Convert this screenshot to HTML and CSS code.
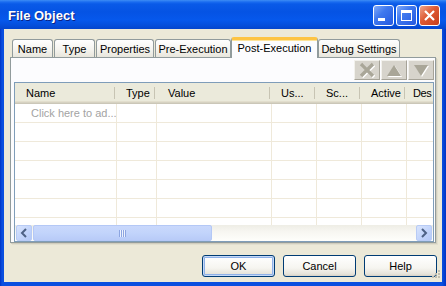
FILE: index.html
```html
<!DOCTYPE html>
<html lang="en">

<head>
    <meta charset="utf-8">
    <title>File Object</title>
    <link rel="stylesheet" href="styles.css">
</head>

<body>

    <div class="window">
        <div class="titlebar">
            <span class="title">File Object</span>
            <div class="caption-btns">
                <span class="cap">
                    <svg width="19" height="19" viewBox="0 0 19 19"><rect x="4" y="12" width="7" height="3" fill="#fff"/></svg>
                </span>
                <span class="cap">
                    <svg width="19" height="19" viewBox="0 0 19 19"><rect x="4.5" y="4.5" width="10" height="10" fill="none" stroke="#fff"/><rect x="4" y="4" width="11" height="3" fill="#fff"/></svg>
                </span>
                <span class="cap cap-close">
                    <svg width="19" height="19" viewBox="0 0 19 19"><path d="M5 5 L14 14 M14 5 L5 14" stroke="#fff" stroke-width="2.2"/></svg>
                </span>
            </div>
        </div>

        <div class="client">
            <div class="tabs">
                <div class="tab" style="width:41px">Name</div>
                <div class="tab" style="width:41px">Type</div>
                <div class="tab" style="width:58px">Properties</div>
                <div class="tab" style="width:76px">Pre-Execution</div>
                <div class="tab active" style="width:87px">Post-Execution</div>
                <div class="tab" style="width:82px">Debug Settings</div>
            </div>

            <div class="panel">
                <div class="toolbar">
                    <span class="tool">
                        <svg width="16" height="16" viewBox="0 0 16 16"><path d="M2 2 L14 14 M14 2 L2 14" stroke="#fff" stroke-width="3.4" transform="translate(1 1)"/><path d="M2 2 L14 14 M14 2 L2 14" stroke="#a9a698" stroke-width="3.4"/></svg>
                    </span>
                    <span class="tool">
                        <svg width="16" height="16" viewBox="0 0 16 16"><path d="M8 3 L15 14 L1 14 Z" fill="#fff" transform="translate(1 1)"/><path d="M8 3 L15 14 L1 14 Z" fill="#a9a698"/></svg>
                    </span>
                    <span class="tool">
                        <svg width="16" height="16" viewBox="0 0 16 16"><path d="M1 3 L15 3 L8 14 Z" fill="#fff" transform="translate(1 1)"/><path d="M1 3 L15 3 L8 14 Z" fill="#a9a698"/></svg>
                    </span>
                </div>

                <div class="grid">
                    <div class="grid-view">
                        <table>
                            <thead>
                                <tr>
                                    <th class="c-name">Name</th>
                                    <th class="c-type">Type</th>
                                    <th class="c-value">Value</th>
                                    <th class="c-small">Us...</th>
                                    <th class="c-small">Sc...</th>
                                    <th class="c-small">Active</th>
                                    <th class="c-desc">Des</th>
                                </tr>
                            </thead>
                            <tbody>
                                <tr><td class="hint">Click here to ad...</td><td></td><td></td><td></td><td></td><td></td><td></td></tr>
                                <tr><td></td><td></td><td></td><td></td><td></td><td></td><td></td></tr>
                                <tr><td></td><td></td><td></td><td></td><td></td><td></td><td></td></tr>
                                <tr><td></td><td></td><td></td><td></td><td></td><td></td><td></td></tr>
                                <tr><td></td><td></td><td></td><td></td><td></td><td></td><td></td></tr>
                                <tr><td></td><td></td><td></td><td></td><td></td><td></td><td></td></tr>
                                <tr><td></td><td></td><td></td><td></td><td></td><td></td><td></td></tr>
                            </tbody>
                        </table>
                    </div>
                    <div class="hscroll">
                        <span class="sb-btn">
                            <svg width="14" height="14" viewBox="0 0 14 14"><path d="M9 3 L5 7 L9 11" fill="none" stroke="#4d6185" stroke-width="2"/></svg>
                        </span>
                        <span class="sb-thumb"><span class="grip-lines"></span></span>
                        <span class="sb-track"></span>
                        <span class="sb-btn">
                            <svg width="14" height="14" viewBox="0 0 14 14"><path d="M5 3 L9 7 L5 11" fill="none" stroke="#4d6185" stroke-width="2"/></svg>
                        </span>
                    </div>
                </div>
            </div>

            <div class="footer">
                <button class="btn default">OK</button>
                <button class="btn">Cancel</button>
                <button class="btn">Help</button>
            </div>

            <svg class="size-grip" width="11" height="11" viewBox="0 0 11 11">
                <g fill="#c2bfb0">
                    <rect x="8" y="0" width="2" height="2"/>
                    <rect x="5" y="3" width="2" height="2"/><rect x="8" y="3" width="2" height="2"/>
                    <rect x="2" y="6" width="2" height="2"/><rect x="5" y="6" width="2" height="2"/><rect x="8" y="6" width="2" height="2"/>
                </g>
            </svg>
        </div>
    </div>

</body>

</html>
```

FILE: styles.css
```css
body {
    margin: 0;
    font-family: "Liberation Sans", Arial, sans-serif;
    font-size: 11px;
    color: #000;
    background: #fff;
}

.window {
    width: 446px;
    height: 286px;
    display: flex;
    flex-direction: column;
    background: linear-gradient(to right, #0033c4 0, #0a4fe0 2px, #0a4fe0 442px, #0033c4 446px);
}

.titlebar {
    height: 29px;
    display: flex;
    align-items: center;
    padding: 1px 6px 0 8px;
    box-sizing: border-box;
    background: linear-gradient(#3d8df5 0, #1a6cf0 2px, #0a5ae8 4px, #0553e4 12px, #0658ec 20px, #054fdc 25px, #0445cd 29px);
}

.title {
    color: #fff;
    font-weight: bold;
    font-size: 13px;
    text-shadow: 1px 1px 0 #0c2283;
}

.caption-btns {
    margin-left: auto;
    display: flex;
    gap: 2px;
}

.cap {
    width: 21px;
    height: 21px;
    box-sizing: border-box;
    border: 1px solid #fff;
    border-radius: 3px;
    background: linear-gradient(135deg, #80aaf9 0, #3f78ee 40%, #2459e0 100%);
    display: flex;
}

.cap-close {
    background: linear-gradient(135deg, #eea58c 0, #de5a34 45%, #c63d1a 100%);
}

.client {
    flex: 1;
    margin: 0 4px 4px 4px;
    background: #ece9d8;
    padding: 8px 6px 0 6px;
    display: flex;
    flex-direction: column;
    position: relative;
}

.tabs {
    display: flex;
    align-items: flex-end;
    height: 20px;
    padding-left: 2px;
    gap: 1px;
}

.tab {
    height: 18px;
    box-sizing: border-box;
    border: 1px solid #919b9c;
    border-bottom: none;
    border-radius: 3px 3px 0 0;
    background: linear-gradient(#ffffff, #f5f4ef 55%, #e8e6dc);
    text-align: center;
    line-height: 18px;
    white-space: nowrap;
}

.tab.active {
    height: 21px;
    margin: 0 -1px -1px -1px;
    background: #fcfcfe;
    border-top: 3px solid #fdc443;
    box-shadow: inset 0 1px 0 #fde39a;
    line-height: 16px;
    position: relative;
    z-index: 1;
    border-radius: 3px 3px 0 0;
}

.panel {
    height: 186px;
    box-sizing: border-box;
    border: 1px solid #919b9c;
    background: #fcfcfe;
    padding: 2px 1px 0 3px;
    box-shadow: 1px 1px 0 #d0cdbd, 2px 2px 0 #e2dfcf;
}

.toolbar {
    height: 20px;
    display: flex;
    justify-content: flex-end;
    margin-bottom: 2px;
}

.tool {
    width: 26px;
    height: 20px;
    box-sizing: border-box;
    background: #d7d4cc;
    border: 1px solid;
    border-color: #f2f1ec #a6a398 #a6a398 #f2f1ec;
    display: flex;
    align-items: center;
    justify-content: center;
    margin-left: 1px;
}

.grid {
    height: 160px;
    box-sizing: border-box;
    border: 1px solid #7f9db9;
    background: #fff;
    display: flex;
    flex-direction: column;
}

.grid-view {
    height: 142px;
    overflow: hidden;
}

table {
    width: 460px;
    table-layout: fixed;
    border-collapse: separate;
    border-spacing: 0;
}

th {
    box-sizing: border-box;
    text-align: left;
    font-weight: normal;
    line-height: 18px;
    padding: 1px 0 2px 9px;
    white-space: nowrap;
    overflow: hidden;
    background:
        linear-gradient(#c7c4b3, #c7c4b3) right 2px top 4px / 1px 12px no-repeat,
        linear-gradient(#ebeadb 0, #ebeadb 18px, #e2decd 18px, #e2decd 19px, #d6d2c2 19px, #d6d2c2 20px, #cbc7b8 20px);
}

th.c-name {
    width: 102px;
    padding-left: 11px;
}

th.c-type {
    width: 40px;
}

th.c-value {
    width: 115px;
    padding-left: 11px;
}

th.c-small {
    width: 45px;
}

th.c-desc {
    width: 113px;
    padding-left: 6px;
    letter-spacing: -0.4px;
}

td {
    height: 18px;
    padding: 0;
    line-height: 18px;
    border-right: 1px solid #efe9da;
    border-bottom: 1px solid #efe9da;
    white-space: nowrap;
    overflow: hidden;
}

td.hint {
    color: #a3a3a3;
    padding-left: 16px;
}

.hscroll {
    height: 16px;
    display: flex;
    padding: 0 1px;
    background: linear-gradient(#eeede5, #f7f6f1 40%, #fefefb);
}

.sb-btn {
    width: 16px;
    height: 16px;
    box-sizing: border-box;
    border: 1px solid #b8cbf5;
    border-radius: 2px;
    background: linear-gradient(135deg, #d8e4fd, #c1d3fb 60%, #b4c8f6);
    display: flex;
    align-items: center;
    justify-content: center;
}

.sb-thumb {
    width: 179px;
    height: 16px;
    margin-left: 1px;
    box-sizing: border-box;
    border: 1px solid #b4c8f6;
    border-radius: 2px;
    background: linear-gradient(#c9d8fc, #c2d4fb 50%, #b8cbf8);
    display: flex;
    align-items: center;
    justify-content: center;
}

.grip-lines {
    width: 7px;
    height: 7px;
    background: repeating-linear-gradient(to right, #8ca5e1 0, #8ca5e1 1px, #eef3fe 1px, #eef3fe 2px);
}

.sb-track {
    flex: 1;
}

.footer {
    display: flex;
    justify-content: flex-end;
    gap: 8px;
    margin-top: 12px;
    margin-right: -1px;
}

.btn {
    width: 73px;
    height: 22px;
    box-sizing: border-box;
    border: 1px solid #003c74;
    border-radius: 3px;
    background: linear-gradient(#ffffff, #f6f5f0 60%, #e5e3da 90%, #d6d0c5);
    font-family: "Liberation Sans", Arial, sans-serif;
    font-size: 11px;
    color: #000;
    padding: 0;
}

.btn.default {
    box-shadow: inset 0 0 0 1px #c5d9f7, inset 0 0 0 2px #8fb1e8;
}

.size-grip {
    position: absolute;
    right: 1px;
    bottom: 1px;
}
```
